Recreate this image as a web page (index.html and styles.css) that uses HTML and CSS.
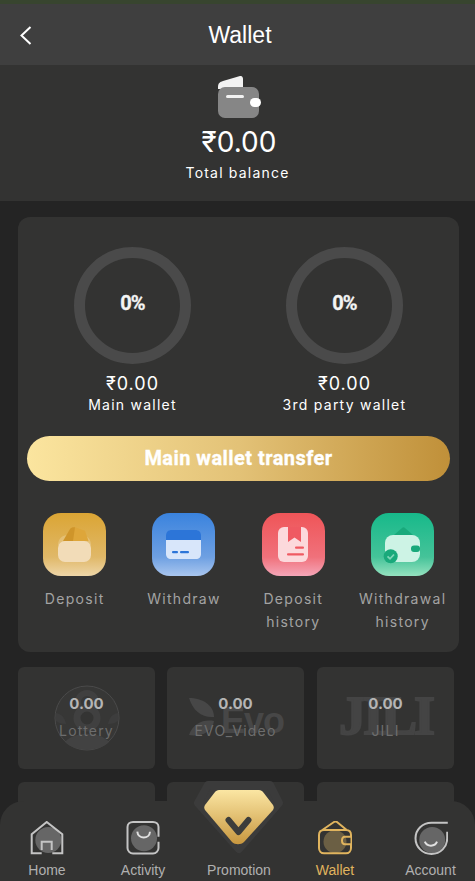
FILE: index.html
```html
<!DOCTYPE html>
<html lang="en">
<head>
  <meta charset="UTF-8">
  <meta name="viewport" content="width=device-width, initial-scale=1.0">
  <title>Wallet</title>
  <link rel="stylesheet" href="styles.css">
</head>
<body>
  <div class="page">
    <div class="top-strip"></div>

    <!-- Header -->
    <header class="header">
      <svg class="back" width="14" height="21" viewBox="0 0 14 21"><path d="M11.500 2 L2.500 10.500 L11.500 19" fill="none" stroke="#fff" stroke-width="2"/></svg>
      <h1>Wallet</h1>
    </header>

    <!-- Total balance -->
    <section class="total">
      <svg class="total-icon" width="44" height="44" viewBox="0 0 44 44">
        <path d="M1 12 C1 8 3 7 6 6 L23 1 C25 .5 26 2 26 4 V14 H1 Z" fill="#f2f2f2"/>
        <rect x="1" y="12" width="41" height="31" rx="7" fill="#868686"/>
        <rect x="9" y="20" width="18" height="3" rx="1.500" fill="#f2f2f2"/>
        <rect x="33" y="23" width="11" height="9" rx="4.500" fill="#fff"/>
      </svg>
      <div class="total-amount">₹0.00</div>
      <div class="total-label">Total balance</div>
    </section>

    <main class="content">
      <!-- Wallet card -->
      <section class="card">
        <div class="rings">
          <div class="ring-col">
            <div class="ring"><span>0%</span></div>
            <div class="ring-amount">₹0.00</div>
            <div class="ring-label">Main wallet</div>
          </div>
          <div class="ring-col">
            <div class="ring"><span>0%</span></div>
            <div class="ring-amount">₹0.00</div>
            <div class="ring-label">3rd party wallet</div>
          </div>
        </div>

        <button class="transfer">Main wallet transfer</button>

        <div class="actions">
          <div class="action">
            <div class="action-icon gold">
              <svg width="63" height="63" viewBox="0 0 63 63">
                <path d="M15 32 C15 26 19 22 25 22 H38 C44 22 48 26 48 32 Z" fill="#fff" opacity=".2"/>
                <path d="M20 28 L27 16 C28 14.500 30 14 32 14.300 L34 28 Z" fill="#cf952a"/>
                <path d="M32 14.300 L42 17.700 L45.500 28 H30 Z" fill="#dea63a"/>
                <rect x="15" y="28" width="33" height="21" rx="7" fill="#f2dcb8"/>
              </svg>
            </div>
            <div class="action-label">Deposit</div>
          </div>
          <div class="action">
            <div class="action-icon blue">
              <svg width="63" height="63" viewBox="0 0 63 63">
                <path d="M14 23 C14 19 16 17 20 17 H43 C47 17 49 19 49 23 V27 H14 Z" fill="#2c75d8"/>
                <path d="M14 27 H49 V41 C49 44 47 46 44 46 H19 C16 46 14 44 14 41 Z" fill="#d8e6fa"/>
                <rect x="20" y="38" width="6" height="2.300" rx="1" fill="#2c75d8"/>
                <rect x="28" y="38" width="9" height="2.300" rx="1" fill="#2c75d8"/>
              </svg>
            </div>
            <div class="action-label">Withdraw</div>
          </div>
          <div class="action">
            <div class="action-icon red">
              <svg width="63" height="63" viewBox="0 0 63 63">
                <rect x="16" y="14" width="30" height="35" rx="6" fill="#fcd9dc"/>
                <path d="M26 14 H39 V29 L32.500 24.500 L26 29 Z" fill="#ef5a62"/>
                <rect x="33" y="33.500" width="9" height="2.300" rx="1" fill="#ef5a62"/>
                <rect x="25" y="40.300" width="17" height="2.300" rx="1" fill="#ef5a62"/>
              </svg>
            </div>
            <div class="action-label">Deposit<br>history</div>
          </div>
          <div class="action">
            <div class="action-icon green">
              <svg width="63" height="63" viewBox="0 0 63 63">
                <path d="M23 22 L31 15 C32 14 33 14 34 15 L42 22 Z" fill="#19a97b"/>
                <rect x="14" y="22" width="35" height="27" rx="8" fill="#cdf3e5"/>
                <rect x="40" y="32.500" width="9" height="6.500" rx="3" fill="#19a97b"/>
                <circle cx="19.700" cy="43.300" r="7" fill="#19a97b"/>
                <path d="M16.500 43.300 L19 45.800 L23 41.500" fill="none" stroke="#7fd6b8" stroke-width="1.800"/>
              </svg>
            </div>
            <div class="action-label">Withdrawal<br>history</div>
          </div>
        </div>
      </section>

      <!-- Game balances -->
      <section class="games">
        <div class="game">
          <svg class="game-logo ball" width="66" height="66" viewBox="0 0 66 66">
            <circle cx="33" cy="33" r="32" fill="#373736" stroke="#4b4b4b" stroke-width="1"/>
            <path d="M1.500 28 C7 28 11 33 12 39 C8 39 4 38 2 36 Z" fill="#3d3d3d"/>
            <path d="M64.500 28 C59 28 55 33 54 39 C58 39 62 38 64 36 Z" fill="#3d3d3d"/>
            <circle cx="33" cy="17" r="9" fill="#373736" stroke="#404040" stroke-width="6"/>
            <circle cx="33" cy="33" r="10" fill="#343433" stroke="#404040" stroke-width="7"/>
            <path d="M11 57 C20 46 46 46 55 57 C46 67 20 67 11 57 Z" fill="#424242"/>
          </svg>
          <div class="game-amount">0.00</div>
          <div class="game-label">Lottery</div>
        </div>
        <div class="game">
          <svg class="game-logo leaf" width="30" height="44" viewBox="0 0 30 44">
            <path d="M1 1 C14 1 26 8 26 20 C14 21 5 14 1 1 Z" fill="#474747"/>
            <path d="M1 38 C5 26 16 22 26 24 C25 34 14 40 1 38 Z" fill="#474747"/>
          </svg>
          <div class="evo-mark">Evo</div>
          <div class="game-amount">0.00</div>
          <div class="game-label">EVO_Video</div>
        </div>
        <div class="game">
          <div class="jili-mark">JILI</div>
          <div class="game-amount">0.00</div>
          <div class="game-label">JILI</div>
        </div>
        <div class="game"></div>
        <div class="game"></div>
        <div class="game"></div>
      </section>
    </main>

    <!-- Bottom tab bar -->
    <nav class="tabbar">
      <div class="tab">
        <svg width="34" height="36" viewBox="0 0 34 36">
          <circle cx="18.300" cy="19" r="13" fill="#666"/>
          <path d="M11.700 32.300 H1.700 V13.300 L16.700 1 L32.300 13.300 V32.300 H22.300" fill="none" stroke="#c4c4c4" stroke-width="2"/>
          <path d="M11.700 29 V20.700 H21.700 V29" fill="none" stroke="#c4c4c4" stroke-width="2"/>
        </svg>
        <span>Home</span>
      </div>
      <div class="tab">
        <svg width="34" height="36" viewBox="0 0 34 36">
          <circle cx="18" cy="17.300" r="13" fill="#666"/>
          <path d="M32.500 15.700 V6 C32.500 3 30 1 27 1 H7 C4 1 1.500 3 1.500 6 V27 C1.500 30 4 32.500 7 32.500 H27 C30 32.500 32.500 30 32.500 27 V20.700" fill="none" stroke="#c4c4c4" stroke-width="2"/>
          <path d="M11.300 10.700 C12 18.500 23.500 18.500 24 10.700" fill="none" stroke="#e0e0e0" stroke-width="2"/>
        </svg>
        <span>Activity</span>
      </div>
      <div class="tab tab-promo">
        <span>Promotion</span>
      </div>
      <div class="tab tab-active">
        <svg width="34" height="36" viewBox="0 0 34 36">
          <circle cx="17" cy="20.700" r="11.500" fill="#6b5f44"/>
          <path d="M4.300 9 L16 1 C17 .3 18 .3 19 1 L28.700 9" fill="none" stroke="#e0b45e" stroke-width="2"/>
          <path d="M33 15 V14 C33 11 31 9 28 9 H6 C3 9 1 11 1 14 V27 C1 30 3 32.300 6 32.300 H28 C31 32.300 33 30 33 27 V23.500" fill="none" stroke="#e0b45e" stroke-width="2"/>
          <path d="M33.500 15.700 H27 C23 15.700 23 23.300 27 23.300 H33.500 Z" fill="none" stroke="#e0b45e" stroke-width="2"/>
        </svg>
        <span>Wallet</span>
      </div>
      <div class="tab">
        <svg width="34" height="36" viewBox="0 0 34 36">
          <circle cx="18.200" cy="19" r="13" fill="#666"/>
          <path d="M33.800 1.700 H17.500 C8.500 1.700 1.500 8.500 1.500 17.300 C1.500 26 8.500 33 17.500 33 C26.500 33 33.200 26 33.200 17.300 V10.700" fill="none" stroke="#c4c4c4" stroke-width="2"/>
          <path d="M10.800 20.700 C13 26 21 26 23 20.700" fill="none" stroke="#e0e0e0" stroke-width="2"/>
        </svg>
        <span>Account</span>
      </div>
      <svg class="promo-badge" width="90" height="76" viewBox="0 0 90 76">
        <defs>
          <linearGradient id="gem" x1="0" y1="0" x2="0" y2="1">
            <stop offset="0" stop-color="#fbe6a3"/>
            <stop offset="1" stop-color="#c8973f"/>
          </linearGradient>
        </defs>
        <path d="M14 5 H76 L85 23 L45 69 L4 23 Z" fill="#3b3b3b" stroke="#3b3b3b" stroke-linejoin="round" stroke-width="8"/>
        <path d="M25 10 H65 C67 10 68 11 69 12 L79 25 C80 27 80 28 79 30 L50 62 C47 65 41 65 38 62 L11 30 C10 28 10 27 11 25 L21 12 C22 11 23 10 25 10 Z" fill="url(#gem)"/>
        <path d="M34.500 40 L44.500 52 L54.500 40" fill="none" stroke="#3d3d3b" stroke-width="6" stroke-linecap="round" stroke-linejoin="round"/>
      </svg>
    </nav>
  </div>
</body>
</html>
```

FILE: styles.css
```css
/* General page */
* {
  box-sizing: border-box;
}

html,
body {
  margin: 0;
  height: 100%;
}

body {
  background-color: #242424;
  font-family: 'Inter', 'Liberation Sans', sans-serif;
  overflow: hidden;
}

.page {
  position: relative;
  height: 881px;
  overflow: hidden;
  display: flex;
  flex-direction: column;
}

.top-strip {
  height: 4px;
  background-color: #38452f;
  flex-shrink: 0;
}

/* Header */
.header {
  height: 61px;
  flex-shrink: 0;
  background-color: #3f3f3f;
  display: flex;
  align-items: center;
  justify-content: center;
  position: relative;
}

.header h1 {
  margin: 0 0 0 5px;
  color: #fff;
  font-family: 'Liberation Sans', sans-serif;
  font-size: 23px;
  font-weight: 400;
  padding-top: 1px;
}

.back {
  position: absolute;
  left: 19px;
  top: 21px;
}

/* Total balance */
.total {
  height: 136px;
  flex-shrink: 0;
  background-color: #333332;
  padding-top: 10px;
  display: flex;
  flex-direction: column;
  align-items: center;
  color: #fff;
}

.total-icon {
  display: block;
  margin-left: 3px;
}

.total-amount {
  font-size: 28px;
  line-height: 36px;
  margin-top: 5px;
  margin-left: 3px;
}

.total-label {
  font-size: 14px;
  line-height: 18px;
  letter-spacing: 1.200px;
  margin-top: 4px;
}

/* Wallet card */
.content {
  padding: 16px 16px 0 18px;
}

.card {
  width: 441px;
  height: 435px;
  background-color: #333332;
  border-radius: 12px;
  padding: 30px 9px 0;
}

.rings {
  display: flex;
  justify-content: space-between;
  padding: 0 32.500px;
}

.ring-col {
  width: 146px;
  display: flex;
  flex-direction: column;
  align-items: center;
  color: #fff;
}

.ring {
  width: 117px;
  height: 117px;
  border: 11px solid #4a4a4a;
  border-radius: 50%;
  display: flex;
  align-items: center;
  justify-content: center;
}

.ring span {
  font-family: 'Roboto', sans-serif;
  font-size: 20px;
  font-weight: 700;
  letter-spacing: -1px;
  color: #f4f4f4;
  -webkit-text-stroke: .3px #f4f4f4;
  margin-bottom: 5px;
}

.ring-amount {
  font-size: 18px;
  line-height: 22px;
  letter-spacing: 1px;
  margin-top: 9px;
}

.ring-label {
  font-size: 14px;
  line-height: 18px;
  letter-spacing: 1.250px;
  white-space: nowrap;
  margin-top: 1px;
}

.transfer {
  display: block;
  width: 423px;
  height: 45px;
  margin-top: 22px;
  padding: 0 0 2px;
  border: none;
  border-radius: 23px;
  background: linear-gradient(90deg, #fbe59f 0%, #e3c277 50%, #c09039 100%);
  color: #fff;
  font-family: 'Roboto', sans-serif;
  font-size: 20px;
  font-weight: 700;
  letter-spacing: .45px;
  -webkit-text-stroke: .3px #fff;
}

/* Action icons */
.actions {
  display: grid;
  grid-template-columns: repeat(4, 109.333px);
  margin-top: 32px;
  margin-left: -7px;
}

.action {
  display: flex;
  flex-direction: column;
  align-items: center;
}

.action-icon {
  width: 63px;
  height: 63px;
  border-radius: 18px;
  overflow: hidden;
}

.action-icon svg {
  display: block;
}

.gold {
  background: linear-gradient(180deg, #dba534 0%, #e0b868 70%, #eed6a8 100%);
}

.blue {
  background: linear-gradient(180deg, #3a83de 0%, #6ea0e2 70%, #a9c6ef 100%);
}

.red {
  background: linear-gradient(180deg, #ef5558 0%, #f0717b 70%, #f5a6b8 100%);
}

.green {
  background: linear-gradient(180deg, #17b98a 0%, #45c399 70%, #95e2bf 100%);
}

.action-label {
  color: #a3a3a3;
  font-size: 14px;
  line-height: 23px;
  letter-spacing: 1.300px;
  text-align: center;
  margin-top: 11px;
  white-space: nowrap;
}

/* Game balance tiles */
.games {
  display: grid;
  grid-template-columns: 137px 137px 137px;
  column-gap: 12px;
  row-gap: 13px;
  margin-top: 15px;
}

.game {
  position: relative;
  height: 102px;
  background-color: #333332;
  border-radius: 6px;
  display: flex;
  flex-direction: column;
  align-items: center;
  padding-top: 27px;
  overflow: hidden;
}

.game:nth-child(3n) {
  margin-left: 1px;
  margin-right: -1px;
}

.game-logo {
  position: absolute;
}

.ball {
  left: 36px;
  top: 18px;
}

.leaf {
  left: 21px;
  top: 30px;
}

.evo-mark {
  position: absolute;
  left: 54px;
  top: 33px;
  font-family: 'Liberation Sans', sans-serif;
  font-size: 36px;
  font-weight: 700;
  letter-spacing: -1px;
  color: #474747;
}

.jili-mark {
  position: absolute;
  left: 22px;
  top: 18px;
  font-family: 'Liberation Serif', serif;
  font-size: 54px;
  font-weight: 700;
  letter-spacing: -3px;
  color: #444;
  -webkit-text-stroke: 2px #444;
}

.game-amount {
  position: relative;
  color: #b5b5b5;
  font-size: 15px;
  line-height: 20px;
  font-weight: 700;
}

.game-label {
  position: relative;
  color: #6d6d6d;
  font-size: 14px;
  line-height: 18px;
  letter-spacing: 1.200px;
  margin-top: 8px;
}

/* Bottom tab bar */
.tabbar {
  position: absolute;
  left: 0;
  right: 0;
  bottom: 0;
  height: 80px;
  background-color: #333332;
  border-radius: 24px 24px 0 0;
  display: grid;
  grid-template-columns: 94px 98px 94px 98px 91px;
  padding-top: 20px;
}

.tab {
  display: flex;
  flex-direction: column;
  align-items: center;
  color: #b0b0b0;
  font-family: 'Liberation Sans', sans-serif;
  font-size: 14px;
  line-height: 16px;
}

.tab:last-of-type {
  padding-left: 2px;
}

.tab svg {
  display: block;
  margin-bottom: 5px;
}

.tab-promo {
  justify-content: flex-end;
  padding-bottom: 3px;
}

.tab-active {
  color: #e0b45e;
}

.promo-badge {
  position: absolute;
  left: 194px;
  top: -21px;
}
```
